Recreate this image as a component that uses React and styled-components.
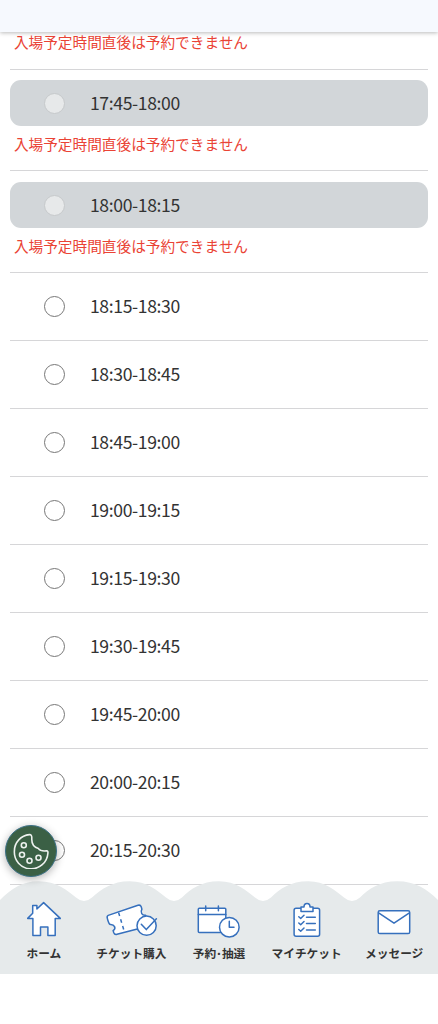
import React from "react";
import styled, { createGlobalStyle } from "styled-components";

const GlobalStyle = createGlobalStyle`
  * { box-sizing: border-box; }
  body { margin: 0; background: #fff; color: #333; font-family: "Noto Sans CJK JP", "Noto Sans", sans-serif; }
`;

const Screen = styled.div`
  position: relative;
  display: flex;
  flex-direction: column;
  height: 1024px;
  overflow: hidden;
  background: #fff;
`;

const Header = styled.header`
  position: relative;
  z-index: 1;
  flex: none;
  height: 32px;
  background: #f6f9fe;
  box-shadow: 0 1px 4px rgba(0, 0, 0, 0.27);
`;

const SlotList = styled.ul`
  list-style: none;
  margin: 0;
  padding: 0 10.4px;
  flex: 1;
  min-height: 0;
`;

const SlotRow = styled.li`
  display: flex;
  flex-direction: column;
  height: ${(p) => p.$height}px;
  padding-top: ${(p) => p.$gap}px;
  border-bottom: 1px solid #d6d6d8;
`;

const SlotLabel = styled.label`
  display: flex;
  align-items: center;
  flex: none;
  height: 46px;
  padding-left: 33.6px;
  border-radius: 11px;
  background: ${(p) => (p.$disabled ? "#d2d6d9" : "transparent")};
`;

const Radio = styled.span`
  flex: none;
  width: 21px;
  height: 21px;
  margin-right: 25px;
  border-radius: 50%;
  border: 1px solid ${(p) => (p.$disabled ? "#c6c9cb" : "#777")};
  background: ${(p) => (p.$disabled ? "#e7e9ea" : "#fff")};
`;

const Time = styled.span`
  font-size: 17.6px;
  letter-spacing: -0.38px;
  line-height: 24px;
  white-space: nowrap;
`;

const Note = styled.p`
  margin: ${(p) => (p.$partial ? -1 : 7)}px 0 0 3.5px;
  font-size: 14.67px;
  line-height: 22px;
  color: #ea4335;
  white-space: nowrap;
`;

const NavBar = styled.nav`
  position: absolute;
  left: 0;
  right: 0;
  bottom: 50.5px;
  display: flex;
  flex-direction: column;
  height: 92.5px;
`;

const Wave = styled.svg`
  flex: none;
  width: 100%;
  height: 20px;
  overflow: visible;
  fill: #e6eaeb;
`;

const NavItems = styled.div`
  flex: 1;
  display: grid;
  grid-template-columns: repeat(5, 1fr);
  background: #e6eaeb;
`;

const NavItem = styled.a`
  display: flex;
  flex-direction: column;
  align-items: center;
  min-width: 0;
`;

const NavIcon = styled.svg`
  position: relative;
  flex: none;
  width: 60px;
  height: 42px;
  margin-top: -3px;
  fill: #fff;
  stroke: #3670bd;
  stroke-width: 1.5;
  stroke-linecap: round;
  stroke-linejoin: round;
`;

const NavLabel = styled.span`
  margin-top: 4px;
  font-size: 11.7px;
  line-height: 18px;
  font-weight: 700;
  white-space: nowrap;
`;

const CookieButton = styled.button`
  position: absolute;
  left: 4.5px;
  top: 824.5px;
  display: grid;
  place-items: center;
  width: 52px;
  height: 52px;
  padding: 0;
  border: 1px solid #3b7085;
  border-radius: 50%;
  background: #3b6045;
  box-shadow: 0 2px 8px rgba(0, 0, 0, 0.3);
`;

const CookieSvg = styled.svg`
  width: 36px;
  height: 36px;
  fill: none;
  stroke: #edf1ee;
  stroke-width: 1.6;
  stroke-linejoin: round;
`;

const HomeIcon = () => (
  <path d="M18.9 37.6V20.4H13.7L18.7 15.3V7.4H22.9V11L29.6 4.6L46.3 20.4H41.2V37.6H33.9V29H26.5V37.6Z" />
);

const TicketIcon = () => (
  <>
    <path d="M7.2 17.4L37 7.3Q39.4 6.6 40.2 8.8L40.9 11.2C39 14.4 41 17.6 44.6 17.2L48 28L16 36.3Q13.6 37 12.8 34.8L12.1 32.6C15.6 30.4 13.4 26.2 9.4 26.4C7.8 26.4 7.4 24.2 6.4 20.6Q5.6 18.2 7.2 17.4Z" />
    <path d="M17.6 14.6L23.3 33.5" fill="none" strokeDasharray="3.6 3.4" strokeLinecap="butt" />
    <circle cx="45.6" cy="27.7" r="9.6" />
    <path d="M40.3 26.2L45.3 31.6L55.4 20.8" fill="none" />
  </>
);

const CalendarIcon = () => (
  <>
    <rect x="9.3" y="10.3" width="27.5" height="24.1" rx="1" />
    <path d="M9.3 16.6H36.8M16.7 8V12.7M29.4 8V12.7" />
    <circle cx="40.3" cy="29.2" r="9.8" />
    <path d="M40.3 23.2V29.3H45" fill="none" />
  </>
);

const ChecklistIcon = () => (
  <>
    <rect x="17.1" y="10.3" width="25.5" height="28" rx="2" />
    <path d="M24 13.6V8.9H27C27 4.4 33 4.4 33 8.9H36V13.6Z" />
    <path
      d="M29.5 19.2H38.3M29.5 25.4H38.3M29.5 32H38.3M21.8 18.8L23.7 20.5L27 17.3M21.8 25L23.7 26.7L27 23.5M21.8 31.5L23.7 33.2L27 30"
      fill="none"
    />
  </>
);

const MailIcon = () => (
  <>
    <rect x="14.2" y="12.8" width="31.5" height="22.8" rx="1.6" />
    <path d="M15 15.2L30 25.2L45 15.2" fill="none" />
  </>
);

const CookieIcon = () => (
  <CookieSvg viewBox="0 0 36 36" aria-hidden="true">
    <path d="M16.4 1.6C8 2.4 1.4 9.4 1.4 18A16.7 16.7 0 0 0 34.9 20.2Q35.2 18 33.6 17.8C30.5 18.2 27.6 18.6 25.4 15.6C20.6 14.2 18.4 10.5 18.8 5Q18.9 1.4 16.4 1.6Z" />
    <circle cx="10.8" cy="12.2" r="2.5" />
    <circle cx="9" cy="21.8" r="2.5" />
    <circle cx="16.5" cy="27.8" r="2.5" />
    <circle cx="25.5" cy="24.7" r="2.5" />
  </CookieSvg>
);

const NavWave = () => (
  <Wave viewBox="0 0 438 20" preserveAspectRatio="none" aria-hidden="true">
    <path d="M0 20.5V19C11 8 22 .3 38.5 .3C57 .3 67 9.5 76 16.5Q84 23.5 92 16.5C102 8 112 .3 129.7 .3C147 .3 157 9.5 166 16.5Q174 23.5 182 16.5C191 8 201 .3 219 .3C236 .3 246 9.5 255 16.5Q263 23.5 271 16.5C280 8 290 .3 308.3 .3C325 .3 335 9.5 344 16.5Q352 23.5 360 16.5C369 8 379 .3 397.4 .3C415 .3 427 8 438 19V20.5Z" />
  </Wave>
);

const slots = [
  { time: "17:45-18:00", disabled: true, height: 101, gap: 10 },
  { time: "18:00-18:15", disabled: true, height: 102, gap: 11 },
  { time: "18:15-18:30" },
  { time: "18:30-18:45" },
  { time: "18:45-19:00" },
  { time: "19:00-19:15" },
  { time: "19:15-19:30" },
  { time: "19:30-19:45" },
  { time: "19:45-20:00" },
  { time: "20:00-20:15" },
  { time: "20:15-20:30" },
];

const navItems = [
  { label: "ホーム", Icon: HomeIcon },
  { label: "チケット購入", Icon: TicketIcon },
  { label: "予約･抽選", Icon: CalendarIcon },
  { label: "マイチケット", Icon: ChecklistIcon },
  { label: "メッセージ", Icon: MailIcon },
];

const NOTE = "入場予定時間直後は予約できません";

export default function App() {
  return (
    <Screen>
      <GlobalStyle />
      <Header />
      <SlotList>
        <SlotRow $height={38} $gap={0}>
          <Note $partial>{NOTE}</Note>
        </SlotRow>
        {slots.map(({ time, disabled, height = 68, gap = 10 }) => (
          <SlotRow key={time} $height={height} $gap={gap}>
            <SlotLabel $disabled={disabled}>
              <Radio $disabled={disabled} />
              <Time>{time}</Time>
            </SlotLabel>
            {disabled && <Note>{NOTE}</Note>}
          </SlotRow>
        ))}
      </SlotList>
      <NavBar>
        <NavWave />
        <NavItems>
          {navItems.map(({ label, Icon }) => (
            <NavItem key={label}>
              <NavIcon viewBox="0 0 60 42">
                <Icon />
              </NavIcon>
              <NavLabel>{label}</NavLabel>
            </NavItem>
          ))}
        </NavItems>
      </NavBar>
      <CookieButton aria-label="Cookie">
        <CookieIcon />
      </CookieButton>
    </Screen>
  );
}
